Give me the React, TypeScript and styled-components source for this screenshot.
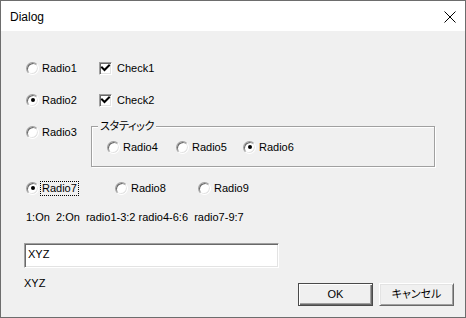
import React from "react";
import styled, { createGlobalStyle } from "styled-components";

const FONT = `"Liberation Sans", "Noto Sans CJK JP", sans-serif`;

const GlobalStyle = createGlobalStyle`
  html, body { margin: 0; padding: 0; background: #f0f0f0; }
  body { font-family: ${FONT}; font-size: 11px; color: #000; }
  * { box-sizing: border-box; }
`;

const Window = styled.div`
  width: 466px;
  height: 318px;
  border: 1px solid #6d6d6d;
  display: flex;
  flex-direction: column;
  background: #f0f0f0;
  overflow: hidden;
`;

const TitleBar = styled.div`
  height: 30px;
  flex: none;
  background: #fff;
  display: flex;
  align-items: center;
  justify-content: space-between;
  padding: 0 9px 0 9px;
`;

const Title = styled.span`
  font-size: 12px;
  line-height: 16px;
  padding-top: 1px;
`;

const CloseBox = styled.span`
  display: flex;
  width: 12px;
  height: 12px;
  margin-top: 1px;
`;

const Body = styled.div`
  flex: 1;
  display: flex;
  flex-direction: column;
  padding: 29px 0 0 23px;
`;

const Row = styled.div<{ $mt?: number; $pl?: number; $top?: boolean }>`
  display: flex;
  align-items: ${(p) => (p.$top ? "flex-start" : "center")};
  min-height: 16px;
  margin-top: ${(p) => p.$mt ?? 0}px;
  padding-left: ${(p) => p.$pl ?? 0}px;
`;

const Item = styled.label<{ $w?: number }>`
  display: flex;
  align-items: center;
  height: 16px;
  flex: none;
  width: ${(p) => (p.$w ? `${p.$w}px` : "auto")};
`;

const RadioCircle = styled.span<{ $on?: boolean }>`
  position: relative;
  width: 13px;
  height: 13px;
  flex: none;
  border-radius: 50%;
  background: #fff;
  border: 1px solid;
  border-color: #a0a0a0 #ffffff #ffffff #a0a0a0;
  box-shadow: inset 1px 1px 0 #696969, inset -1px -1px 0 #e3e3e3;
  &::after {
    content: "";
    display: ${(p) => (p.$on ? "block" : "none")};
    position: absolute;
    left: 3.5px;
    top: 3.5px;
    width: 4px;
    height: 4px;
    border-radius: 50%;
    background: #000;
  }
`;

const CheckBoxBox = styled.span`
  display: flex;
  width: 13px;
  height: 13px;
  flex: none;
  background: #fff;
  border: 1px solid;
  border-color: #a0a0a0 #ffffff #ffffff #a0a0a0;
  box-shadow: inset 1px 1px 0 #696969, inset -1px -1px 0 #e3e3e3;
`;

const ItemText = styled.span<{ $gap?: number; $focus?: boolean }>`
  margin-left: ${(p) => p.$gap ?? 2}px;
  line-height: 13px;
  white-space: nowrap;
  padding: 0 1px;
  border: 1px dotted ${(p) => (p.$focus ? "#000" : "transparent")};
`;

const GroupBox = styled.div`
  position: relative;
  width: 344px;
  height: 41px;
  margin-top: 2px;
  border: 1px solid #a0a0a0;
  box-shadow: 1px 1px 0 #fff, inset 1px 1px 0 #fff;
  padding: 12px 0 0 15px;
  display: flex;
  align-items: flex-start;
  align-self: flex-start;
`;

const GroupLegend = styled.span`
  position: absolute;
  left: 6px;
  top: -8px;
  padding: 0 2px;
  line-height: 14px;
  background: #f0f0f0;
  font-size: 11px;
  font-feature-settings: "palt";
  letter-spacing: -0.3px;
`;

const Status = styled.div`
  margin-top: 14px;
  padding-left: 2px;
  line-height: 14px;
  white-space: pre;
`;

const BottomArea = styled.div`
  display: flex;
  margin-top: 19px;
`;

const LeftCol = styled.div`
  display: flex;
  flex-direction: column;
  width: 255px;
`;

const Edit = styled.div`
  width: 255px;
  height: 25px;
  background: #fff;
  border: 1px solid;
  border-color: #a0a0a0 #ffffff #ffffff #a0a0a0;
  box-shadow: inset 1px 1px 0 #696969, inset -1px -1px 0 #e3e3e3;
  padding: 4px 0 0 3px;
  line-height: 13px;
`;

const EchoLabel = styled.div`
  margin-top: 8px;
  line-height: 14px;
`;

const Buttons = styled.div`
  display: flex;
  gap: 6px;
  margin-left: 19px;
  padding-top: 40px;
`;

const Button = styled.button<{ $default?: boolean }>`
  width: 75px;
  height: 23px;
  padding: 0;
  margin: 0;
  font-family: ${FONT};
  font-size: 11px;
  font-feature-settings: "palt";
  color: #000;
  background: #f0f0f0;
  border: 1px solid;
  border-color: ${(p) =>
    p.$default ? "#4a4a4a" : "#ffffff #696969 #696969 #ffffff"};
  box-shadow: ${(p) =>
    p.$default
      ? "inset 1px 1px 0 #ffffff, inset -1px -1px 0 #696969, inset -2px -2px 0 #a0a0a0"
      : "inset 1px 1px 0 #e3e3e3, inset -1px -1px 0 #a0a0a0"};
  display: flex;
  align-items: center;
  justify-content: center;
  line-height: 13px;
`;

function Radio({ label, on, w, focus }: { label: string; on?: boolean; w?: number; focus?: boolean }) {
  return (
    <Item $w={w}>
      <RadioCircle $on={on} />
      <ItemText $gap={1} $focus={focus}>{label}</ItemText>
    </Item>
  );
}

function Check({ label, w }: { label: string; w?: number }) {
  return (
    <Item $w={w}>
      <CheckBoxBox>
        <svg width="11" height="11" viewBox="0 0 11 11">
          <path d="M2 4.5 L4.5 7 L9 2.5" fill="none" stroke="#000" strokeWidth="2" strokeLinecap="square" />
        </svg>
      </CheckBoxBox>
      <ItemText $gap={3}>{label}</ItemText>
    </Item>
  );
}

export default function App() {
  return (
    <>
      <GlobalStyle />
      <Window>
        <TitleBar>
          <Title>Dialog</Title>
          <CloseBox>
            <svg width="12" height="12" viewBox="0 0 12 12">
              <path d="M0.5 0.5 L11.5 11.5 M11.5 0.5 L0.5 11.5" stroke="#000" strokeWidth="1" fill="none" />
            </svg>
          </CloseBox>
        </TitleBar>
        <Body>
          <Row $pl={2}>
            <Radio label="Radio1" w={73} />
            <Check label="Check1" />
          </Row>
          <Row $pl={2} $mt={16}>
            <Radio label="Radio2" on w={73} />
            <Check label="Check2" />
          </Row>
          <Row $pl={2} $mt={16} $top>
            <Radio label="Radio3" w={65} />
            <GroupBox>
              <GroupLegend>スタティック</GroupLegend>
              <Radio label="Radio4" w={69} />
              <Radio label="Radio5" w={67} />
              <Radio label="Radio6" on />
            </GroupBox>
          </Row>
          <Row $pl={2} $mt={13}>
            <Radio label="Radio7" on w={89} focus />
            <Radio label="Radio8" w={83} />
            <Radio label="Radio9" />
          </Row>
          <Status>{"1:On  2:On  radio1-3:2 radio4-6:6  radio7-9:7"}</Status>
          <BottomArea>
            <LeftCol>
              <Edit>XYZ</Edit>
              <EchoLabel>XYZ</EchoLabel>
            </LeftCol>
            <Buttons>
              <Button $default>OK</Button>
              <Button>キャンセル</Button>
            </Buttons>
          </BottomArea>
        </Body>
      </Window>
    </>
  );
}
